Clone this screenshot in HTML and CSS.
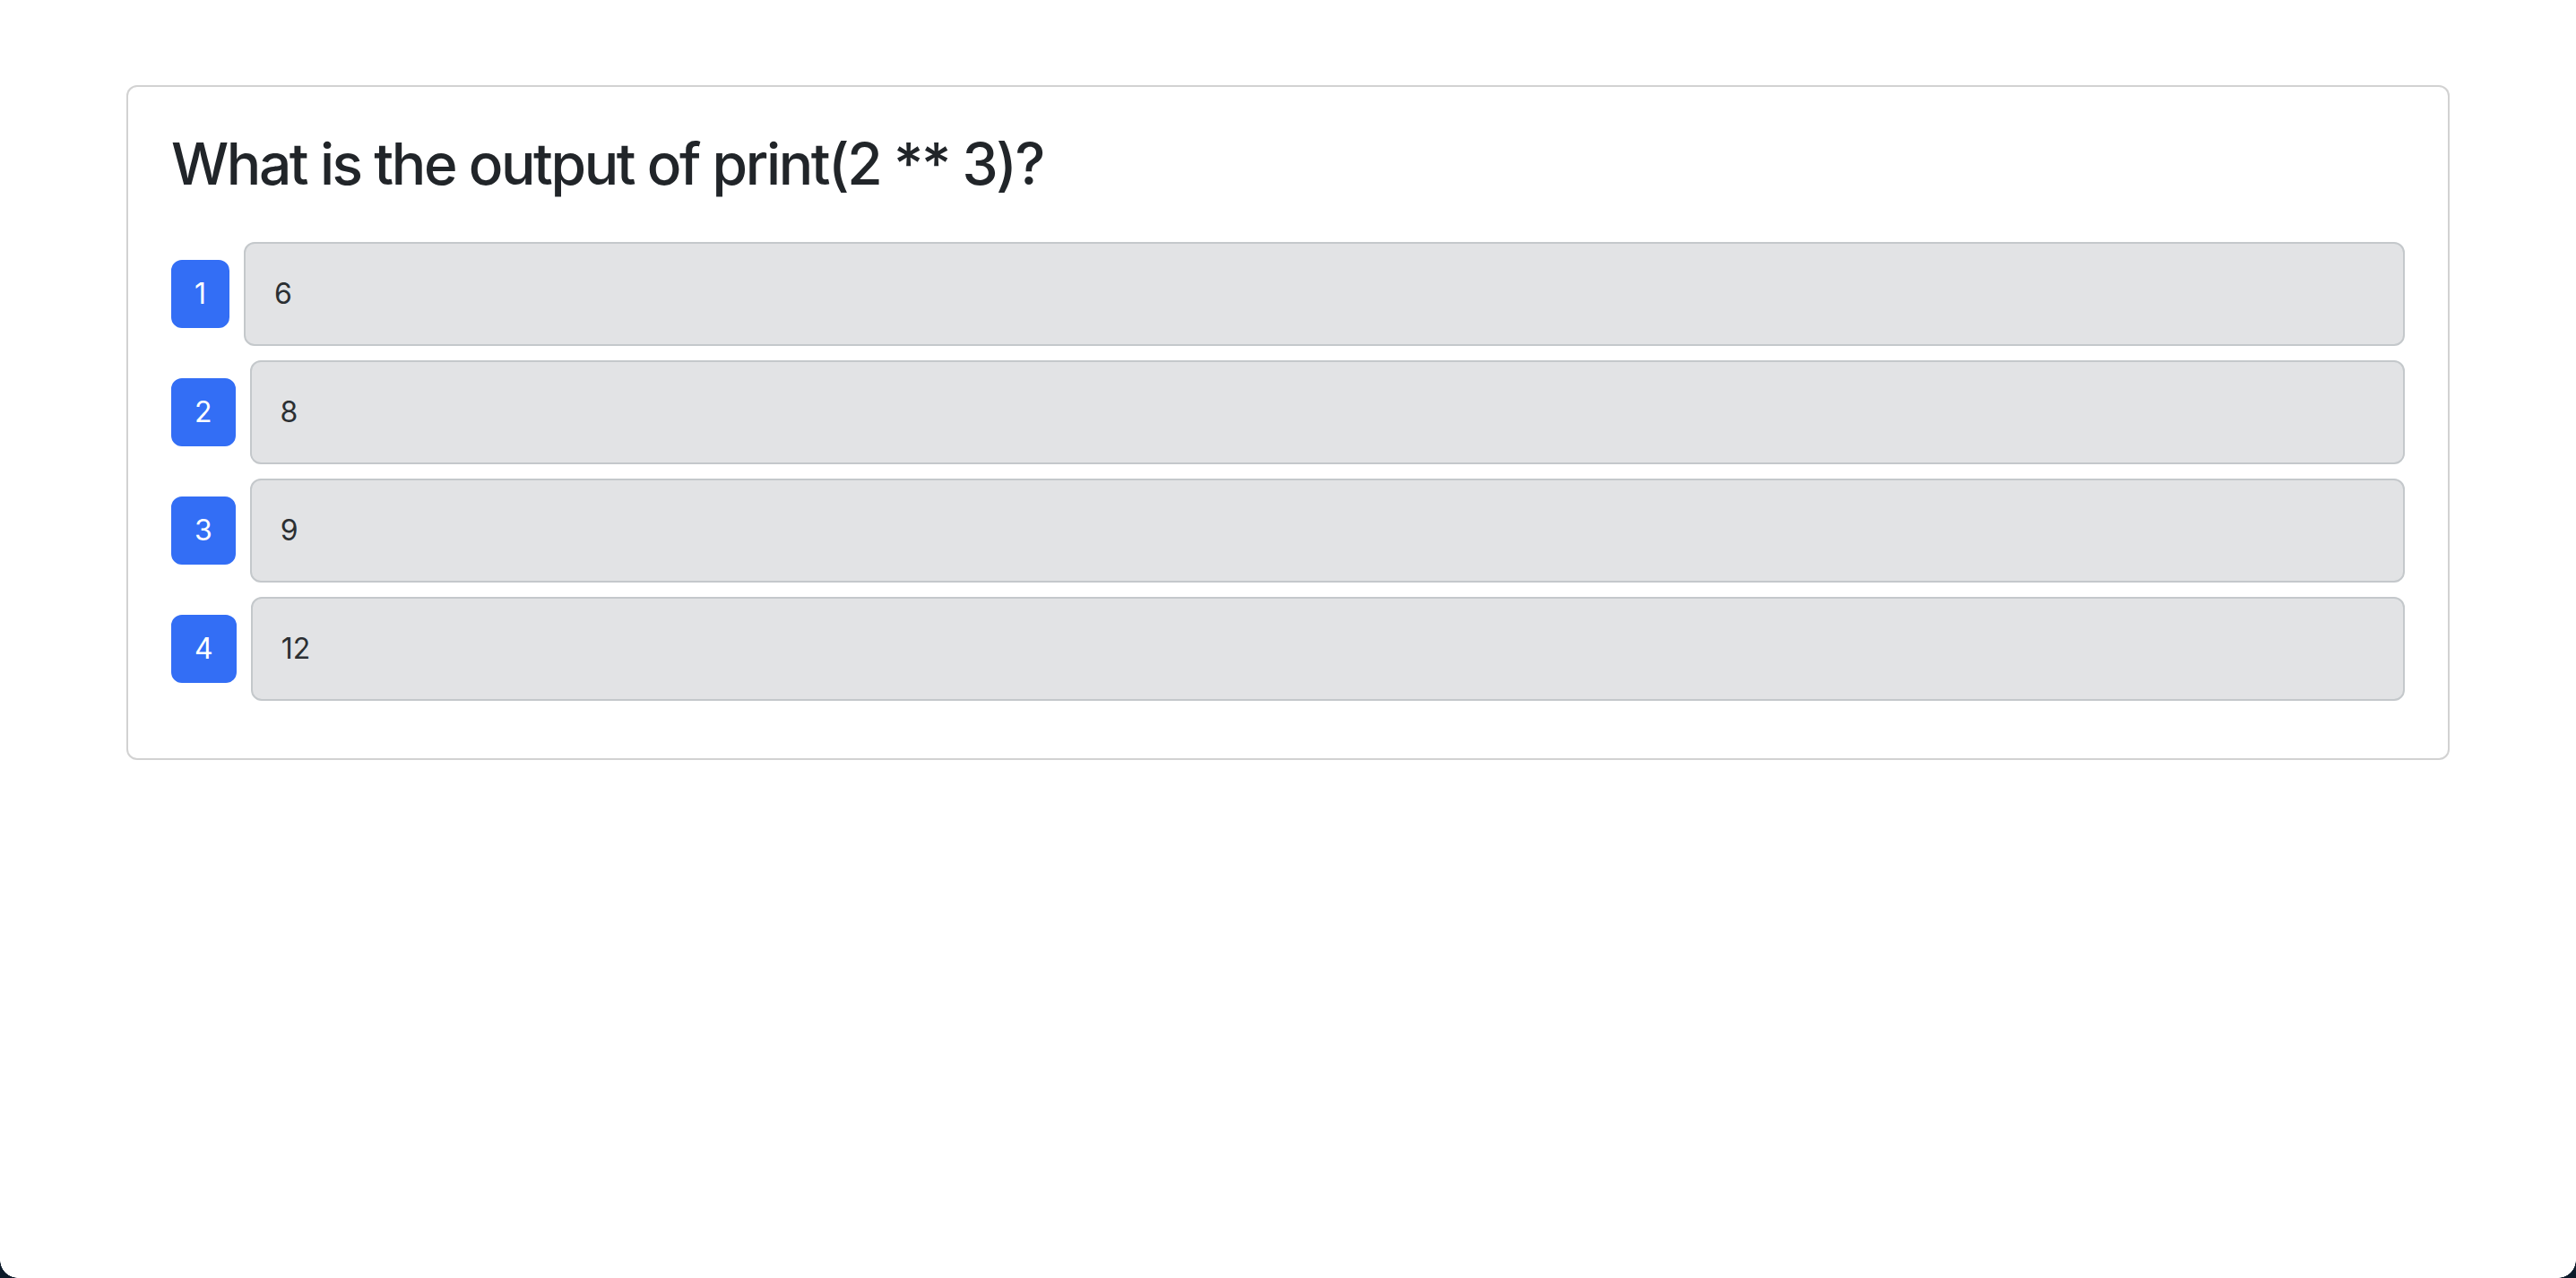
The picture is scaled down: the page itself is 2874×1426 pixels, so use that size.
FILE: index.html
```html
<!DOCTYPE html>
<html lang="en">
<head>
<meta charset="utf-8">
<title>Quiz</title>
<link rel="stylesheet" href="styles.css">
</head>
<body>
<div class="container">
  <div class="card">
    <div class="card-body">
      <h2 class="question">What is the output of print(2 ** 3)?</h2>
      <div class="options">
        <div class="option">
          <button class="num">1</button>
          <div class="answer">6</div>
        </div>
        <div class="option">
          <button class="num">2</button>
          <div class="answer">8</div>
        </div>
        <div class="option">
          <button class="num">3</button>
          <div class="answer">9</div>
        </div>
        <div class="option">
          <button class="num">4</button>
          <div class="answer">12</div>
        </div>
      </div>
    </div>
  </div>
</div>
<div class="corner corner-left"></div>
<div class="corner corner-right"></div>
</body>
</html>
```

FILE: styles.css
```css
html, body {
  margin: 0;
  padding: 0;
  background: #ffffff;
}

body {
  font-family: Inter, "Noto Sans", "Liberation Sans", sans-serif;
  color: #212529;
  font-size: 32px;
  line-height: 1.5;
  min-height: 1426px;
}

.container {
  max-width: 2592px;
  margin: 95px auto 0;
}

.card {
  border: 2px solid rgba(0, 0, 0, 0.175);
  border-radius: 12px;
  background: #fff;
}

.card-body {
  padding: 48px;
}

.question {
  margin: 0 0 48px;
  font-size: 64px;
  font-weight: 500;
  line-height: 1.2;
  letter-spacing: -2.4px;
  color: #212529;
}

.option {
  display: flex;
  align-items: center;
  gap: 16px;
  margin-bottom: 16px;
}

.num {
  flex: none;
  font-family: inherit;
  font-size: 32px;
  line-height: 1.5;
  padding: 12px 24px;
  color: #fff;
  background: #336ef5;
  border: 2px solid #336ef5;
  border-radius: 12px;
  cursor: pointer;
}

.answer {
  flex: 1;
  padding: 32px;
  background: #e2e3e5;
  border: 2px solid #c4c8cb;
  border-radius: 12px;
  color: #2b2f32;
  font-size: 32px;
  line-height: 1.5;
}

.corner {
  position: fixed;
  bottom: 0;
  width: 20px;
  height: 20px;
  pointer-events: none;
}

.corner-left {
  left: 0;
  background: radial-gradient(circle at 100% 0, transparent 19.5px, #0d1b2a 20px);
}

.corner-right {
  right: 0;
  background: radial-gradient(circle at 0 0, transparent 19.5px, #0d1b2a 20px);
}
```
